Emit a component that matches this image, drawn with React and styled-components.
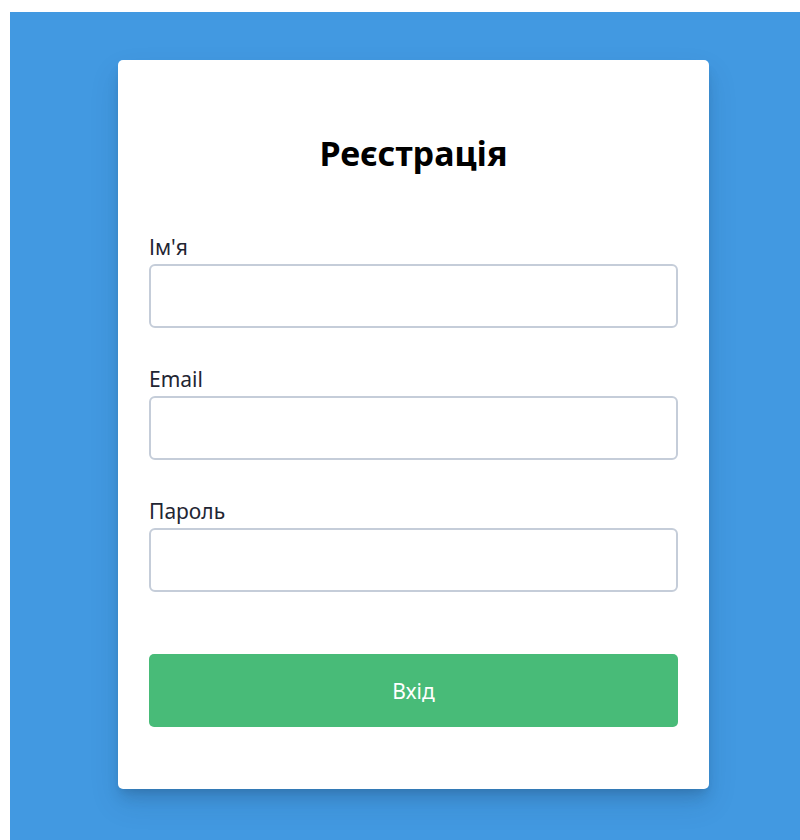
import React from "react";
import styled, { createGlobalStyle } from "styled-components";

const GlobalStyle = createGlobalStyle`
  html, body {
    margin: 0;
    padding: 0;
    background: #ffffff;
    overflow: hidden;
  }
  body {
    font-family: "Noto Sans", "Open Sans", sans-serif;
  }
`;

const Page = styled.div`
  margin: 12px 0 0 10px;
  min-height: 860px;
  background: #4299e1;
  padding: 48px 0 0 108px;
  box-sizing: border-box;
`;

const Card = styled.form`
  width: 591px;
  box-sizing: border-box;
  background: #ffffff;
  border-radius: 5px;
  padding: 73px 31px 62px;
  box-shadow: 0 10px 15px -3px rgba(0, 0, 0, 0.12), 0 4px 6px -2px rgba(0, 0, 0, 0.06),
    0 14px 30px rgba(20, 40, 80, 0.12);
`;

const Title = styled.h1`
  margin: 0 0 60px;
  text-align: center;
  font-size: 34px;
  line-height: 40px;
  font-weight: 700;
  color: #000000;
`;

const Field = styled.div`
  display: flex;
  flex-direction: column;
  margin-bottom: 37px;
`;

const Label = styled.label`
  font-size: 21px;
  line-height: 28px;
  color: #1f2633;
  margin-bottom: 3px;
`;

const Input = styled.input`
  height: 64px;
  box-sizing: border-box;
  border: 2px solid #c5cdd9;
  border-radius: 6px;
  padding: 0 14px;
  font-size: 18px;
  font-family: inherit;
  background: #ffffff;
  outline: none;
`;

const Button = styled.button`
  display: block;
  width: 100%;
  height: 73px;
  margin-top: 62px;
  border: none;
  border-radius: 5px;
  background: #48bb78;
  color: #ffffff;
  font-family: inherit;
  font-size: 21px;
  cursor: pointer;
`;

const fields = [
  { id: "name", label: "Ім'я", type: "text" },
  { id: "email", label: "Email", type: "email" },
  { id: "password", label: "Пароль", type: "password" },
];

export default function App() {
  return (
    <>
      <GlobalStyle />
      <Page>
        <Card onSubmit={(e) => e.preventDefault()}>
          <Title>Реєстрація</Title>
          {fields.map((f) => (
            <Field key={f.id}>
              <Label htmlFor={f.id}>{f.label}</Label>
              <Input id={f.id} type={f.type} />
            </Field>
          ))}
          <Button type="submit">Вхід</Button>
        </Card>
      </Page>
    </>
  );
}
